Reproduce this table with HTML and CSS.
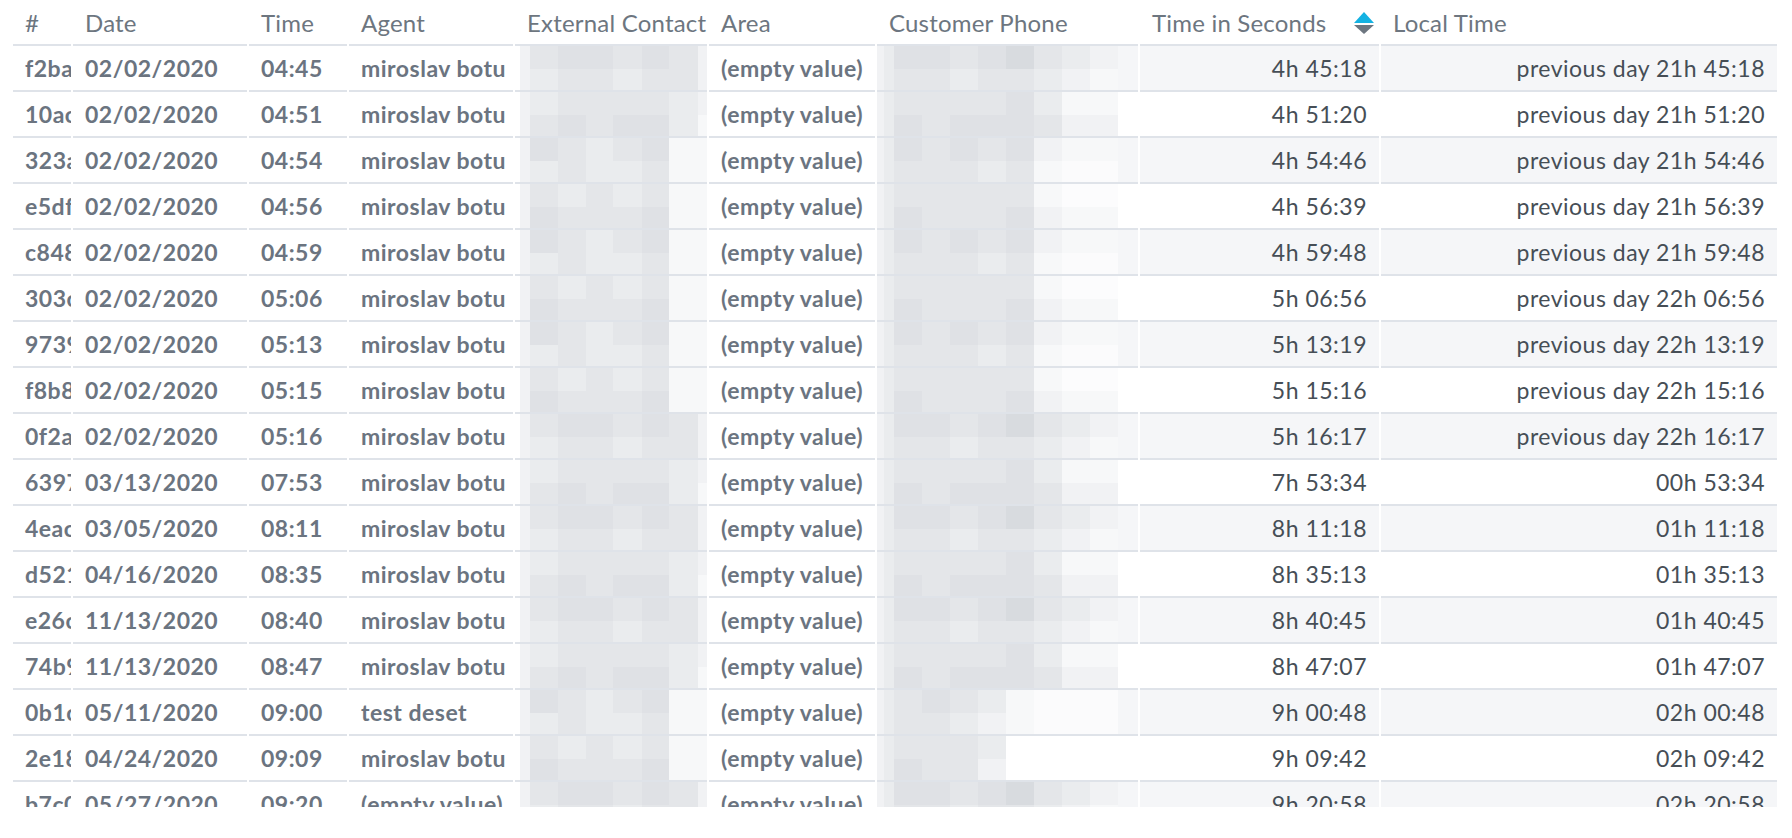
FILE: index.html
```html
<!DOCTYPE html>
<html lang="en">
<head>
<meta charset="utf-8">
<title>Report</title>
<link rel="stylesheet" href="styles.css">
</head>
<body>
<div class="grid-wrap">
<table class="report">
<colgroup>
<col class="c-id"><col class="c-date"><col class="c-time"><col class="c-agent"><col class="c-ext"><col class="c-area"><col class="c-phone"><col class="c-secs"><col class="c-local">
</colgroup>
<thead>
<tr>
<th>#</th><th>Date</th><th>Time</th><th>Agent</th><th>External Contact</th><th>Area</th><th>Customer Phone</th>
<th class="sorted"><span class="th-inner">Time in Seconds<svg class="sort-icon" width="20" height="22" viewBox="0 0 20 22"><polygon points="0,11 10,0 20,11" fill="#14b2e2"/><polygon points="0,13 20,13 10,22" fill="#6d7680"/></svg></span></th>
<th>Local Time</th>
</tr>
</thead>
<tbody>
<tr><td class="attr">f2ba71c9</td><td class="attr">02/02/2020</td><td class="attr">04:45</td><td class="attr">miroslav botu</td><td class="mosaic ext-a"></td><td class="attr">(empty value)</td><td class="mosaic ph-a"></td><td class="num">4h 45:18</td><td class="num">previous day 21h 45:18</td></tr>
<tr><td class="attr">10ac5e2f</td><td class="attr">02/02/2020</td><td class="attr">04:51</td><td class="attr">miroslav botu</td><td class="mosaic ext-c"></td><td class="attr">(empty value)</td><td class="mosaic ph-c"></td><td class="num">4h 51:20</td><td class="num">previous day 21h 51:20</td></tr>
<tr><td class="attr">323a8d04</td><td class="attr">02/02/2020</td><td class="attr">04:54</td><td class="attr">miroslav botu</td><td class="mosaic ext-b"></td><td class="attr">(empty value)</td><td class="mosaic ph-b"></td><td class="num">4h 54:46</td><td class="num">previous day 21h 54:46</td></tr>
<tr><td class="attr">e5df9a13</td><td class="attr">02/02/2020</td><td class="attr">04:56</td><td class="attr">miroslav botu</td><td class="mosaic ext-d"></td><td class="attr">(empty value)</td><td class="mosaic ph-d"></td><td class="num">4h 56:39</td><td class="num">previous day 21h 56:39</td></tr>
<tr><td class="attr">c848e0b7</td><td class="attr">02/02/2020</td><td class="attr">04:59</td><td class="attr">miroslav botu</td><td class="mosaic ext-b"></td><td class="attr">(empty value)</td><td class="mosaic ph-b"></td><td class="num">4h 59:48</td><td class="num">previous day 21h 59:48</td></tr>
<tr><td class="attr">303c42fa</td><td class="attr">02/02/2020</td><td class="attr">05:06</td><td class="attr">miroslav botu</td><td class="mosaic ext-d"></td><td class="attr">(empty value)</td><td class="mosaic ph-d"></td><td class="num">5h 06:56</td><td class="num">previous day 22h 06:56</td></tr>
<tr><td class="attr">97391bd6</td><td class="attr">02/02/2020</td><td class="attr">05:13</td><td class="attr">miroslav botu</td><td class="mosaic ext-b"></td><td class="attr">(empty value)</td><td class="mosaic ph-b"></td><td class="num">5h 13:19</td><td class="num">previous day 22h 13:19</td></tr>
<tr><td class="attr">f8b8a6e1</td><td class="attr">02/02/2020</td><td class="attr">05:15</td><td class="attr">miroslav botu</td><td class="mosaic ext-d"></td><td class="attr">(empty value)</td><td class="mosaic ph-d"></td><td class="num">5h 15:16</td><td class="num">previous day 22h 15:16</td></tr>
<tr><td class="attr">0f2a77c3</td><td class="attr">02/02/2020</td><td class="attr">05:16</td><td class="attr">miroslav botu</td><td class="mosaic ext-a"></td><td class="attr">(empty value)</td><td class="mosaic ph-a"></td><td class="num">5h 16:17</td><td class="num">previous day 22h 16:17</td></tr>
<tr><td class="attr">63975f08</td><td class="attr">03/13/2020</td><td class="attr">07:53</td><td class="attr">miroslav botu</td><td class="mosaic ext-c"></td><td class="attr">(empty value)</td><td class="mosaic ph-c"></td><td class="num">7h 53:34</td><td class="num">00h 53:34</td></tr>
<tr><td class="attr">4eac0d92</td><td class="attr">03/05/2020</td><td class="attr">08:11</td><td class="attr">miroslav botu</td><td class="mosaic ext-a"></td><td class="attr">(empty value)</td><td class="mosaic ph-a"></td><td class="num">8h 11:18</td><td class="num">01h 11:18</td></tr>
<tr><td class="attr">d5219b4e</td><td class="attr">04/16/2020</td><td class="attr">08:35</td><td class="attr">miroslav botu</td><td class="mosaic ext-c"></td><td class="attr">(empty value)</td><td class="mosaic ph-c"></td><td class="num">8h 35:13</td><td class="num">01h 35:13</td></tr>
<tr><td class="attr">e26c3f81</td><td class="attr">11/13/2020</td><td class="attr">08:40</td><td class="attr">miroslav botu</td><td class="mosaic ext-a"></td><td class="attr">(empty value)</td><td class="mosaic ph-a"></td><td class="num">8h 40:45</td><td class="num">01h 40:45</td></tr>
<tr><td class="attr">74b9e2d5</td><td class="attr">11/13/2020</td><td class="attr">08:47</td><td class="attr">miroslav botu</td><td class="mosaic ext-c"></td><td class="attr">(empty value)</td><td class="mosaic ph-c"></td><td class="num">8h 47:07</td><td class="num">01h 47:07</td></tr>
<tr><td class="attr">0b1c6a37</td><td class="attr">05/11/2020</td><td class="attr">09:00</td><td class="attr">test deset</td><td class="mosaic ext-b"></td><td class="attr">(empty value)</td><td class="mosaic ph-e"></td><td class="num">9h 00:48</td><td class="num">02h 00:48</td></tr>
<tr><td class="attr">2e18d4c0</td><td class="attr">04/24/2020</td><td class="attr">09:09</td><td class="attr">miroslav botu</td><td class="mosaic ext-d"></td><td class="attr">(empty value)</td><td class="mosaic ph-f"></td><td class="num">9h 09:42</td><td class="num">02h 09:42</td></tr>
<tr><td class="attr">b7c05e19</td><td class="attr">05/27/2020</td><td class="attr">09:20</td><td class="attr">(empty value)</td><td class="mosaic ext-a"></td><td class="attr">(empty value)</td><td class="mosaic ph-a"></td><td class="num">9h 20:58</td><td class="num">02h 20:58</td></tr>
</tbody>
</table>
</div>
</body>
</html>
```

FILE: styles.css
```css
:root {
  --line: #dfe3e9;
  --m1: #d8dbdf;
  --m2: #dfe1e5;
  --m3: #e4e6e9;
  --m4: #eaecee;
  --m5: #f1f2f4;
  --m6: #f7f8f9;
  --stripe: #f5f6f8;
}

html, body {
  margin: 0;
  padding: 0;
  background: #fff;
}

body {
  font-family: Lato, "Noto Sans", sans-serif;
}

.grid-wrap {
  height: 807px;
  overflow: hidden;
}

.report {
  margin-left: 11px;
  border-collapse: separate;
  border-spacing: 2px 0;
  table-layout: fixed;
  width: 1768px;
}

.c-id { width: 58px; }
.c-date { width: 174px; }
.c-time { width: 98px; }
.c-agent { width: 164px; }
.c-ext { width: 192px; }
.c-area { width: 166px; }
.c-phone { width: 261px; }
.c-secs { width: 239px; }
.c-local { width: 396px; }

.report th,
.report td {
  box-sizing: border-box;
  height: 46px;
  padding: 0 12px;
  border-bottom: 2px solid var(--line);
  white-space: nowrap;
  overflow: hidden;
  vertical-align: middle;
  font-size: 23px;
  letter-spacing: 0.5px;
}

.report th {
  text-align: left;
  font-weight: 400;
  font-size: 24px;
  letter-spacing: 0.2px;
  color: #6d7680;
}

.th-inner {
  display: inline-flex;
  align-items: center;
  gap: 28px;
}

.sort-icon {
  display: block;
  flex: none;
  margin-top: 2px;
}

.attr {
  font-weight: 700;
  color: #6b7480;
}

.num {
  text-align: right;
  color: #464e56;
}

.report tbody tr:nth-child(odd) .num,
.report tbody tr:nth-child(odd) .mosaic.ph-a,
.report tbody tr:nth-child(odd) .mosaic.ph-b,
.report tbody tr:nth-child(odd) .mosaic.ph-c,
.report tbody tr:nth-child(odd) .mosaic.ph-d,
.report tbody tr:nth-child(odd) .mosaic.ph-e,
.report tbody tr:nth-child(odd) .mosaic.ph-f {
  background-color: var(--stripe);
}

.mosaic {
  border-bottom-color: transparent;
  background-origin: border-box;
  background-clip: border-box;
  background-repeat: no-repeat;
}

/* External Contact redaction mosaic */
.ext-a {
  background-image:
    linear-gradient(90deg, #fff 0 5px, var(--m5) 5px 15px, var(--m3) 15px 43px, var(--m2) 43px 71px, var(--m2) 71px 98px, var(--m3) 98px 127px, var(--m2) 127px 154px, var(--m3) 154px 183px, var(--m5) 183px),
    linear-gradient(90deg, #fff 0 5px, var(--m5) 5px 15px, var(--m4) 15px 43px, var(--m3) 43px 71px, var(--m3) 71px 98px, var(--m4) 98px 127px, var(--m3) 127px 154px, var(--m3) 154px 183px, var(--m5) 183px);
  background-size: 100% 50%, 100% 50%;
  background-position: top left, bottom left;
}
.ext-c {
  background-image:
    linear-gradient(90deg, #fff 0 5px, var(--m5) 5px 15px, var(--m4) 15px 43px, var(--m3) 43px 71px, var(--m3) 71px 98px, var(--m3) 98px 127px, var(--m3) 127px 154px, var(--m4) 154px 183px, var(--m5) 183px),
    linear-gradient(90deg, #fff 0 5px, var(--m5) 5px 15px, var(--m3) 15px 43px, var(--m2) 43px 71px, var(--m3) 71px 98px, var(--m2) 98px 127px, var(--m2) 127px 154px, var(--m4) 154px 183px, var(--m6) 183px);
  background-size: 100% 50%, 100% 50%;
  background-position: top left, bottom left;
}
.ext-b {
  background-image:
    linear-gradient(90deg, #fff 0 5px, var(--m5) 5px 15px, var(--m2) 15px 43px, var(--m3) 43px 71px, var(--m4) 71px 98px, var(--m3) 98px 127px, var(--m2) 127px 154px, var(--m6) 154px),
    linear-gradient(90deg, #fff 0 5px, var(--m5) 5px 15px, var(--m4) 15px 43px, var(--m3) 43px 71px, var(--m4) 71px 98px, var(--m4) 98px 127px, var(--m3) 127px 154px, var(--m6) 154px);
  background-size: 100% 50%, 100% 50%;
  background-position: top left, bottom left;
}
.ext-d {
  background-image:
    linear-gradient(90deg, #fff 0 5px, var(--m5) 5px 15px, var(--m3) 15px 43px, var(--m4) 43px 71px, var(--m3) 71px 98px, var(--m4) 98px 127px, var(--m3) 127px 154px, var(--m6) 154px),
    linear-gradient(90deg, #fff 0 5px, var(--m5) 5px 15px, var(--m2) 15px 43px, var(--m3) 43px 71px, var(--m3) 71px 98px, var(--m3) 98px 127px, var(--m2) 127px 154px, var(--m6) 154px);
  background-size: 100% 50%, 100% 50%;
  background-position: top left, bottom left;
}

/* Customer Phone redaction mosaic */
.ph-a {
  background-image:
    linear-gradient(90deg, var(--m5) 0 7px, var(--m4) 7px 17px, var(--m2) 17px 45px, var(--m2) 45px 73px, var(--m3) 73px 101px, var(--m2) 101px 129px, var(--m1) 129px 157px, var(--m3) 157px 185px, var(--m4) 185px 213px, var(--m5) 213px 241px, transparent 241px),
    linear-gradient(90deg, var(--m5) 0 7px, var(--m4) 7px 17px, var(--m3) 17px 45px, var(--m3) 45px 73px, var(--m4) 73px 101px, var(--m3) 101px 129px, var(--m3) 129px 157px, var(--m4) 157px 185px, var(--m5) 185px 213px, var(--m6) 213px 241px, transparent 241px),
    linear-gradient(var(--line), var(--line));
  background-size: 100% 50%, 100% 50%, 20px 2px;
  background-position: top left, bottom left, bottom right;
}
.ph-c {
  background-image:
    linear-gradient(90deg, var(--m5) 0 7px, var(--m4) 7px 17px, var(--m3) 17px 45px, var(--m3) 45px 73px, var(--m3) 73px 101px, var(--m3) 101px 129px, var(--m2) 129px 157px, var(--m4) 157px 185px, var(--m6) 185px 241px, transparent 241px),
    linear-gradient(90deg, var(--m5) 0 7px, var(--m4) 7px 17px, var(--m2) 17px 45px, var(--m3) 45px 73px, var(--m2) 73px 101px, var(--m2) 101px 129px, var(--m2) 129px 157px, var(--m3) 157px 185px, var(--m5) 185px 241px, transparent 241px),
    linear-gradient(var(--line), var(--line));
  background-size: 100% 50%, 100% 50%, 20px 2px;
  background-position: top left, bottom left, bottom right;
}
.ph-b {
  background-image:
    linear-gradient(90deg, var(--m5) 0 7px, var(--m4) 7px 17px, var(--m2) 17px 45px, var(--m3) 45px 73px, var(--m2) 73px 101px, var(--m3) 101px 129px, var(--m2) 129px 157px, var(--m5) 157px 185px, var(--m6) 185px 241px, transparent 241px),
    linear-gradient(90deg, var(--m5) 0 7px, var(--m4) 7px 17px, var(--m3) 17px 45px, var(--m3) 45px 73px, var(--m3) 73px 101px, var(--m4) 101px 129px, var(--m3) 129px 157px, var(--m6) 157px 185px, #fbfbfc 185px 241px, transparent 241px),
    linear-gradient(var(--line), var(--line));
  background-size: 100% 50%, 100% 50%, 20px 2px;
  background-position: top left, bottom left, bottom right;
}
.ph-d {
  background-image:
    linear-gradient(90deg, var(--m5) 0 7px, var(--m4) 7px 17px, var(--m3) 17px 45px, var(--m3) 45px 73px, var(--m3) 73px 101px, var(--m3) 101px 129px, var(--m3) 129px 157px, var(--m6) 157px 185px, #fcfcfd 185px 241px, transparent 241px),
    linear-gradient(90deg, var(--m5) 0 7px, var(--m4) 7px 17px, var(--m2) 17px 45px, var(--m3) 45px 73px, var(--m3) 73px 101px, var(--m3) 101px 129px, var(--m2) 129px 157px, var(--m5) 157px 185px, var(--m6) 185px 241px, transparent 241px),
    linear-gradient(var(--line), var(--line));
  background-size: 100% 50%, 100% 50%, 20px 2px;
  background-position: top left, bottom left, bottom right;
}
.ph-e {
  background-image:
    linear-gradient(90deg, var(--m5) 0 7px, var(--m4) 7px 17px, var(--m3) 17px 45px, var(--m2) 45px 73px, var(--m3) 73px 101px, var(--m4) 101px 129px, var(--m6) 129px 157px, #fbfbfc 157px 241px, transparent 241px),
    linear-gradient(90deg, var(--m5) 0 7px, var(--m4) 7px 17px, var(--m3) 17px 45px, var(--m3) 45px 73px, var(--m4) 73px 101px, var(--m5) 101px 129px, var(--m6) 129px 157px, #fbfbfc 157px 241px, transparent 241px),
    linear-gradient(var(--line), var(--line));
  background-size: 100% 50%, 100% 50%, 20px 2px;
  background-position: top left, bottom left, bottom right;
}
.ph-f {
  background-image:
    linear-gradient(90deg, var(--m5) 0 7px, var(--m4) 7px 17px, var(--m3) 17px 45px, var(--m3) 45px 73px, var(--m3) 73px 101px, var(--m4) 101px 129px, #fff 129px 241px, transparent 241px),
    linear-gradient(90deg, var(--m5) 0 7px, var(--m4) 7px 17px, var(--m2) 17px 45px, var(--m3) 45px 73px, var(--m3) 73px 101px, var(--m5) 101px 129px, #fff 129px 241px, transparent 241px),
    linear-gradient(var(--line), var(--line));
  background-size: 100% 50%, 100% 50%, 20px 2px;
  background-position: top left, bottom left, bottom right;
}
```
